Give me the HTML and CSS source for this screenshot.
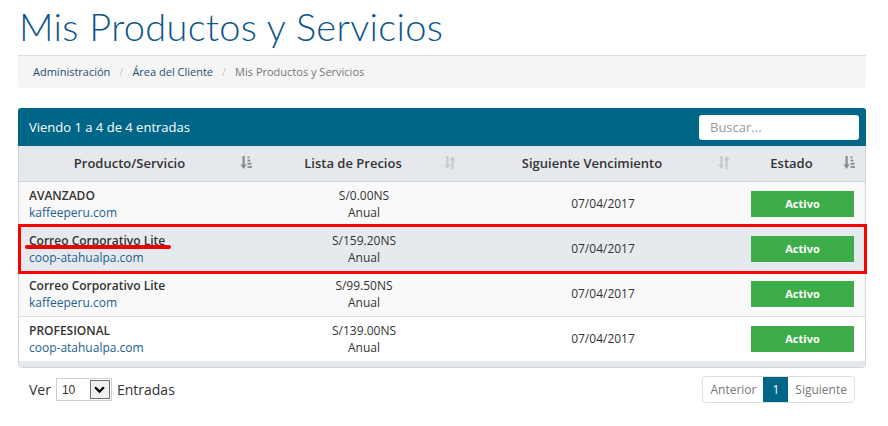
FILE: index.html
```html
<!DOCTYPE html>
<html lang="es">
<head>
<meta charset="utf-8">
<title>Mis Productos y Servicios</title>
<link rel="stylesheet" href="styles.css">
</head>
<body>
<div class="page">
  <h1 class="title">Mis Productos y Servicios</h1>
  <div class="crumbs">
    <a class="crumb-link">Administración</a><span class="sep">/</span>
    <a class="crumb-link">Área del Cliente</a><span class="sep">/</span>
    <span class="crumb-current">Mis Productos y Servicios</span>
  </div>

  <div class="panel">
    <div class="panel-head">
      <span class="count">Viendo 1 a 4 de 4 entradas</span>
      <div class="search">Buscar...</div>
    </div>
    <table class="grid">
      <colgroup>
        <col class="c1"><col class="c2"><col class="c3"><col class="c4">
      </colgroup>
      <thead>
        <tr>
          <th><span class="th-label">Producto/Servicio</span>
            <svg class="sort dark" viewBox="0 0 12 13"><path d="M2.5 0h2.2v8.5h2l-3.1 4.5-3.1-4.5h2z"/><rect x="7.5" y="0.5" width="2" height="1.8"/><rect x="7.5" y="3.7" width="3" height="1.8"/><rect x="7.5" y="6.9" width="4" height="1.8"/><rect x="7.5" y="10.1" width="4.5" height="1.8"/></svg></th>
          <th><span class="th-label">Lista de Precios</span>
            <svg class="sort light" viewBox="0 0 12 13"><path d="M2.3 0h2.2v8.5h2l-3.1 4.5-3.1-4.5h2z"/><path d="M9.7 13H7.5V4.5h-2L8.6 0l3.1 4.5h-2z"/></svg></th>
          <th><span class="th-label">Siguiente Vencimiento</span>
            <svg class="sort light" viewBox="0 0 12 13"><path d="M2.3 0h2.2v8.5h2l-3.1 4.5-3.1-4.5h2z"/><path d="M9.7 13H7.5V4.5h-2L8.6 0l3.1 4.5h-2z"/></svg></th>
          <th><span class="th-label">Estado</span>
            <svg class="sort dark" viewBox="0 0 12 13"><path d="M2.5 0h2.2v8.5h2l-3.1 4.5-3.1-4.5h2z"/><rect x="7.5" y="0.5" width="2" height="1.8"/><rect x="7.5" y="3.7" width="3" height="1.8"/><rect x="7.5" y="6.9" width="4" height="1.8"/><rect x="7.5" y="10.1" width="4.5" height="1.8"/></svg></th>
        </tr>
      </thead>
      <tbody>
        <tr class="r-odd">
          <td class="prod"><strong>AVANZADO</strong><a>kaffeeperu.com</a></td>
          <td class="mid">S/0.00NS<br>Anual</td>
          <td class="mid">07/04/2017</td>
          <td class="mid"><span class="status">Activo</span></td>
        </tr>
        <tr class="r-hl">
          <td class="prod"><strong>Correo Corporativo Lite</strong><a>coop-atahualpa.com</a></td>
          <td class="mid">S/159.20NS<br>Anual</td>
          <td class="mid">07/04/2017</td>
          <td class="mid"><span class="status">Activo</span></td>
        </tr>
        <tr class="r-odd">
          <td class="prod"><strong>Correo Corporativo Lite</strong><a>kaffeeperu.com</a></td>
          <td class="mid">S/99.50NS<br>Anual</td>
          <td class="mid">07/04/2017</td>
          <td class="mid"><span class="status">Activo</span></td>
        </tr>
        <tr class="r-even">
          <td class="prod"><strong>PROFESIONAL</strong><a>coop-atahualpa.com</a></td>
          <td class="mid">S/139.00NS<br>Anual</td>
          <td class="mid">07/04/2017</td>
          <td class="mid"><span class="status">Activo</span></td>
        </tr>
      </tbody>
    </table>
    <div class="panel-foot"></div>
    <div class="mark-box"></div>
    <div class="mark-line"></div>
  </div>

  <div class="footer">
    <div class="length">
      <span>Ver</span>
      <span class="select"><span class="sel-val">10</span><span class="sel-btn"><svg viewBox="0 0 10 7"><path d="M1 1l4 4 4-4" fill="none" stroke="#000" stroke-width="2"/></svg></span></span>
      <span>Entradas</span>
    </div>
    <div class="pager">
      <span class="pg">Anterior</span><span class="pg active">1</span><span class="pg">Siguiente</span>
    </div>
  </div>
</div>
</body>
</html>
```

FILE: styles.css
```css
* { box-sizing: border-box; }
html, body { margin: 0; background: #fff; }
body { font-family: "Open Sans", "Liberation Sans", sans-serif; color: #333; }

.page { width: 848px; margin-left: 18px; }

.title {
  margin: 0;
  height: 56px;
  padding-top: 6px;
  font-family: "Lato", "Open Sans", sans-serif;
  font-weight: 300;
  font-size: 38px;
  line-height: 40px;
  color: #0f5689;
  border-bottom: 1px solid #dcdcdc;
  padding-left: 1px;
  letter-spacing: 0.3px;
}

.crumbs {
  height: 32px;
  background: #f5f5f5;
  border-radius: 0 0 4px 4px;
  padding: 0 15px 1px;
  display: flex;
  align-items: center;
  font-size: 11px;
}
.crumb-link { color: #1d4e72; }
.sep { color: #c8c8c8; padding: 0 9px; }
.crumb-current { color: #777; }

.panel {
  position: relative;
  margin-top: 20px;
  border: 1px solid #d4d4d4;
  border-radius: 4px;
  overflow: visible;
  background: #fff;
}
.panel-head {
  height: 38px;
  background: #006687;
  border-radius: 3px 3px 0 0;
  margin: -1px -1px 0 -1px;
  display: flex;
  align-items: center;
  justify-content: space-between;
  padding: 0 7px 0 11px;
}
.count { color: #fff; font-size: 13px; }
.search {
  width: 160px;
  height: 25px;
  background: #fff;
  border-radius: 3px;
  font-size: 13px;
  color: #999;
  padding: 3px 11px;
}

.grid {
  width: 100%;
  border-collapse: collapse;
  table-layout: fixed;
  font-size: 12px;
}
.c1 { width: 243px; }
.c2 { width: 204px; }
.c3 { width: 274px; }
.c4 { width: 125px; }

.grid thead th {
  position: relative;
  height: 35px;
  background: #e5e9ed;
  border-bottom: 1px solid #cfd3d6;
  font-weight: 600;
  font-size: 13px;
  color: #333;
  padding: 0 30px 0 8px;
  text-align: center;
}
.sort {
  position: absolute;
  right: 10px;
  top: 10px;
  width: 12px;
  height: 13px;
}
.sort.dark { fill: #858b91; }
.sort.light { fill: #c6cacd; }

.grid tbody td {
  height: 45px;
  border-bottom: 1px solid #dedede;
  padding: 0 10px;
  vertical-align: middle;
  line-height: 17px;
}
.r-odd td { background: #f9f9f9; }
.r-hl td { background: #e6eaee; }
.r-even td { background: #fff; }
.grid tbody tr:last-child td { border-bottom: none; }

.prod strong { display: block; font-weight: 600; color: #333; }
.prod a { display: block; color: #1c5f8f; }
.mid { text-align: center; color: #333; }

.status {
  display: inline-block;
  width: 103px;
  height: 26px;
  line-height: 26px;
  background: #3dad49;
  color: #fff;
  font-weight: 700;
  font-size: 11px;
  text-align: center;
}

.panel-foot {
  height: 6px;
  background: #e5e9ed;
  border-radius: 0 0 3px 3px;
}

.mark-box {
  position: absolute;
  left: -1px;
  top: 115px;
  width: 849px;
  height: 50px;
  border: 3px solid #f00;
}
.mark-line {
  position: absolute;
  left: 6px;
  top: 136px;
  width: 146px;
  height: 4px;
  border-radius: 2px;
  background: #e00;
}

.footer {
  display: flex;
  justify-content: space-between;
  align-items: center;
  margin-top: 8px;
  padding-left: 11px;
  padding-right: 11px;
}
.length {
  display: flex;
  align-items: center;
  gap: 5px;
  font-size: 14px;
  color: #333;
}
.select {
  display: inline-flex;
  align-items: center;
  justify-content: space-between;
  width: 56px;
  height: 23px;
  border: 1px solid #cfcfcf;
  padding: 0 1px 0 5px;
  font-family: "Liberation Sans", sans-serif;
  font-size: 12px;
}
.sel-btn {
  width: 20px;
  height: 19px;
  border: 1px solid #707070;
  background: #f0f0f0;
  display: flex;
  align-items: center;
  justify-content: center;
}
.sel-btn svg { width: 11px; height: 8px; }

.pager {
  display: flex;
  border: 1px solid #ddd;
  border-radius: 4px;
  height: 27px;
  font-size: 12px;
  overflow: hidden;
}
.pg {
  display: flex;
  align-items: center;
  padding: 0 7px;
  color: #777;
}
.pg.active { background: #006687; color: #fff; padding: 0 9px; }
```
